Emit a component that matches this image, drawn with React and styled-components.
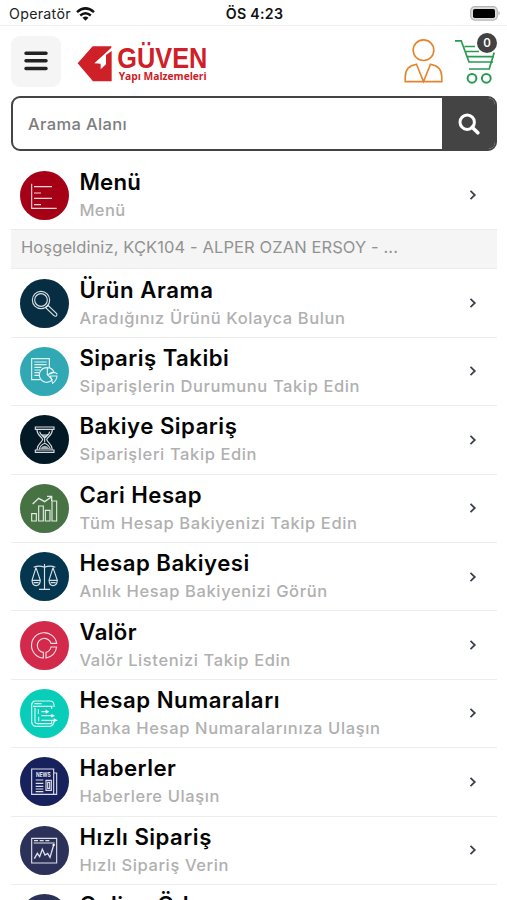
import React from "react";
import styled, { createGlobalStyle } from "styled-components";

const GlobalStyle = createGlobalStyle`
  * { box-sizing: border-box; }
  html, body { margin: 0; padding: 0; background: #fff; }
  body { font-family: Inter, "Liberation Sans", sans-serif; overflow: hidden; }
`;

const Screen = styled.div`
  width: 507px;
  height: 900px;
  overflow: hidden;
  background: #fff;
`;

const StatusBar = styled.div`
  display: grid;
  grid-template-columns: 1fr auto 1fr;
  align-items: center;
  height: 26px;
  padding: 0 6px 0 9px;
  border-bottom: 1px solid #f1f1f1;
  font-size: 14.2px;
  line-height: 24px;
  color: #222;
`;

const Carrier = styled.div`
  display: flex;
  align-items: center;
  gap: 5px;
  padding-top: 2px;
  span { letter-spacing: 0.3px; }
`;

const Clock = styled.div`
  font-weight: 600;
  letter-spacing: 0.3px;
  margin-left: -1px;
  padding-top: 2px;
  color: #111;
`;

const Battery = styled.svg`
  justify-self: end;
  margin-top: 1px;
`;

const Header = styled.header`
  display: flex;
  align-items: flex-start;
  height: 71px;
  padding: 10px 10px 0 11px;
`;

const MenuButton = styled.button`
  display: flex;
  align-items: center;
  justify-content: center;
  width: 50px;
  height: 51px;
  padding: 0 1px 2px 0;
  border: 0;
  border-radius: 9px;
  background: #f5f5f5;
`;

const Logo = styled.svg`
  margin: 4px 0 0 15px;
  overflow: visible;
`;

const Actions = styled.div`
  display: flex;
  margin-left: auto;
  gap: 12px;
  padding-top: 3px;
`;

const CartButton = styled.div`
  position: relative;
  width: 42px;
  height: 45px;
`;

const Badge = styled.span`
  position: absolute;
  top: -6px;
  right: 0;
  width: 20px;
  height: 20px;
  border-radius: 50%;
  background: #424242;
  color: #fff;
  font-size: 11.5px;
  font-weight: 600;
  line-height: 20px;
  text-align: center;
`;

const SearchBox = styled.div`
  display: flex;
  height: 55px;
  margin: -1px 10px 10px 11px;
  border: 2px solid #444;
  border-radius: 9px;
  overflow: hidden;
`;

const SearchLabel = styled.div`
  flex: 1;
  padding-left: 15px;
  line-height: 52px;
  font-size: 16.5px;
  font-weight: 500;
  letter-spacing: 0.36px;
  color: #7d7d7d;
`;

const SearchButton = styled.div`
  display: flex;
  align-items: center;
  justify-content: center;
  width: 53px;
  background: #444;
`;

const List = styled.div`
  margin: 0 10px 0 11px;
`;

const Row = styled.div`
  display: flex;
  align-items: center;
  height: ${(p) => (p.$first ? "68px" : "68.4px")};
  padding: 0 20px 0 9.4px;
  border-top: ${(p) => (p.$first ? "0" : "1px solid #ededed")};
`;

const Labels = styled.div`
  flex: 1;
  padding-left: 10px;
  white-space: nowrap;
`;

const Title = styled.div`
  font-size: 22.2px;
  font-weight: 600;
  line-height: 26px;
  letter-spacing: ${(p) => p.$spacing || 0}px;
  color: #050505;
`;

const Subtitle = styled.div`
  font-size: 16.5px;
  font-weight: 500;
  line-height: 24px;
  padding-top: 3px;
  letter-spacing: ${(p) => p.$spacing || 0}px;
  color: #b0b0b0;
`;

const Welcome = styled.div`
  height: 39.4px;
  padding-left: 10px;
  border-top: 1px solid #ebebeb;
  background: #f5f5f5;
  font-size: 16.5px;
  line-height: 35px;
  letter-spacing: 0.1px;
  color: #929292;
`;

const IconSvg = styled.svg`
  flex: none;
  display: block;
  fill: none;
  stroke: #fff;
  stroke-width: 3.4;
  stroke-opacity: 0.85;
`;

const Disc = ({ color, children }) => (
  <IconSvg width="49" height="49" viewBox="0 0 147 147">
    <circle cx="73.5" cy="73.5" r="73.5" fill={color} stroke="none" />
    {children}
  </IconSvg>
);

const Chevron = () => (
  <svg width="8" height="12" viewBox="0 0 8 12" fill="none" stroke="#3d434b" strokeWidth="1.8">
    <path d="M1.5 1.8 5.8 6 1.5 10.2" />
  </svg>
);

const glyphs = {
  menu: (
    <path d="M35 38V112H110M42 47H96M42 66H63M42 82H96M42 101H63" />
  ),
  search: (
    <>
      <circle cx="63" cy="63" r="26" />
      <circle cx="63" cy="63" r="19" />
      <path d="M79 84 84 79 110 104Q112 108 109 111 105 113 102 110L77 86Z" />
    </>
  ),
  orders: (
    <>
      <path d="M61 98H35V35H88V62M43 45H80M43 53H80M43 61H64M43 69H60M43 77H57M43 85H57" />
      <path d="M82 83V62A22 22 0 1 0 97 98L82 83L102 76A22 22 0 0 0 82 62" />
      <path d="M91 87H111Q110 100 98 109L91 87ZM88 80Q102 72 112 81" />
    </>
  ),
  hourglass: (
    <>
      <path d="M46 36H102V43H46ZM46 105H102V112H46Z" />
      <path d="M51 44C51 62 65 64 68 74 65 84 51 87 51 104M97 44C97 62 83 64 80 74 83 84 97 87 97 104M59 50C60 60 72 64 74 70 77 63 88 61 89 50M74 72V82M58 103C60 91 67 88 74 85 81 88 88 91 91 103" />
      <path d="M64 58H86L74 68ZM60 102Q74 83 89 102Z" fill="#fff" fillOpacity="0.65" stroke="none" />
    </>
  ),
  growth: (
    <>
      <path d="M35 89H49V111H35ZM56 66H70V111H56ZM76 79H90V111H76ZM96 51H110V111H96Z" />
      <path d="M38 60 56 43 74 53 94 39M81 37H95V51" strokeWidth="4" />
    </>
  ),
  scales: (
    <path d="M73.5 36V111M57 112H90M41 46Q57 39 73.5 46 90 39 106 46M48 47 36 85Q37 101 48 101 60 101 61 85L48 47M36 85H61M99 47 87 85Q88 101 99 101 111 101 112 85L99 47M87 85H112M41 92H56M92 92H107" />
  ),
  ring: (
    <>
      <path d="M70 111A38 38 0 1 1 110 67H93A21 21 0 1 0 70 94Z" />
      <path d="M78 94A21 21 0 0 0 93 78H110A38 38 0 0 1 78 111Z" />
    </>
  ),
  bank: (
    <>
      <path d="M102 54V47Q100 36 91 36H44Q35 38 35 48V100Q37 110 47 112H91Q101 109 102 98V94M39 52H98M43 44H65M95 60V54M45 56V100Q47 104 53 104H95V97" />
      <path d="M64 68H80M64 80H98M64 94H104M55 61V75M56 83V97" />
      <path d="M77 62 88 68 77 74ZM94 75 105 80 94 86ZM101 88 113 94 101 100Z" fill="#fff" stroke="none" />
    </>
  ),
  news: (
    <>
      <path d="M35 36H101V112H35ZM102 48H110V112H101M47 69H70M47 79H70M47 88H70M47 96H70M47 104H70M78 70H94V100H78ZM83 76H89V94H83Z" />
      <text x="48" y="61" fontSize="17" fontWeight="600" fontFamily="Inter, sans-serif" fill="#fff" stroke="none" textLength="44" lengthAdjust="spacingAndGlyphs">NEWS</text>
    </>
  ),
  activity: (
    <>
      <path d="M35 37H110V111H35ZM41 51H104" />
      <path d="M42 44H89" strokeDasharray="12 5" strokeWidth="4" />
      <path d="M43 98 52 82 59 92 67 70 75 87 83 82 90 94 101 57" strokeWidth="4" />
      <circle cx="101" cy="57" r="3.5" fill="#fff" stroke="none" />
    </>
  ),
};

const items = [
  { icon: "search", color: "#062d42", title: "Ürün Arama", sub: "Aradığınız Ürünü Kolayca Bulun", titleSpacing: 0.6 },
  { icon: "orders", color: "#30a9b5", title: "Sipariş Takibi", sub: "Siparişlerin Durumunu Takip Edin", titleSpacing: 0.45 },
  { icon: "hourglass", color: "#031a26", title: "Bakiye Sipariş", sub: "Siparişleri Takip Edin" },
  { icon: "growth", color: "#477344", title: "Cari Hesap", sub: "Tüm Hesap Bakiyenizi Takip Edin" },
  { icon: "scales", color: "#05364f", title: "Hesap Bakiyesi", sub: "Anlık Hesap Bakiyenizi Görün" },
  { icon: "ring", color: "#d32a4c", title: "Valör", sub: "Valör Listenizi Takip Edin", titleSpacing: 0.35 },
  { icon: "bank", color: "#08cdb8", title: "Hesap Numaraları", sub: "Banka Hesap Numaralarınıza Ulaşın", titleSpacing: 0.55, subSpacing: 0.64 },
  { icon: "news", color: "#17215c", title: "Haberler", sub: "Haberlere Ulaşın" },
  { icon: "activity", color: "#2b3159", title: "Hızlı Sipariş", sub: "Hızlı Sipariş Verin" },
  { icon: "activity", color: "#2b3159", title: "Online Ödeme", sub: "Online Ödeme Yapın" },
];

const MenuRow = ({ item, first }) => (
  <Row $first={first}>
    <Disc color={item.color}>{glyphs[item.icon]}</Disc>
    <Labels>
      <Title $spacing={item.titleSpacing ?? 0.48}>{item.title}</Title>
      <Subtitle $spacing={item.subSpacing ?? 0.61}>{item.sub}</Subtitle>
    </Labels>
    <Chevron />
  </Row>
);

export default function App() {
  return (
    <>
      <GlobalStyle />
      <Screen>
        <StatusBar>
          <Carrier>
            <span>Operatör</span>
            <svg width="19" height="14" viewBox="0 0 19 14" fill="none" stroke="#111" strokeWidth="2.5">
              <path d="M1 5.1Q9.5-2.4 18 5.1M4.2 8.5Q9.5 4 14.8 8.5" />
              <path d="M6.5 10.7Q9.5 8.5 12.5 10.7L9.5 13.8Z" fill="#111" stroke="none" />
            </svg>
          </Carrier>
          <Clock>ÖS 4:23</Clock>
          <Battery width="31" height="15" viewBox="0 0 31 15">
            <rect x="0.7" y="0.7" width="26.6" height="13.4" rx="4" fill="#ddd" stroke="#b5b5b5" strokeWidth="1.2" />
            <rect x="3" y="3" width="22" height="9" rx="1.8" fill="#000" />
            <path d="M28.5 5Q31 7.2 28.5 9.5Z" fill="#aaa" />
          </Battery>
        </StatusBar>
        <Header>
          <MenuButton aria-label="Menü">
            <svg width="24" height="20" viewBox="0 0 24 20" stroke="#222" strokeWidth="3.5" strokeLinecap="round">
              <path d="M2 2.2H22M2 9.8H22M2 17.6H22" />
            </svg>
          </MenuButton>
          <Logo width="134" height="46" viewBox="228 120 402 138" fill="#cf2027">
            <path d="M233 190 278 139H334V143L283 190 302 191V208L318 193V165L335 153V244H279Z" />
            <text x="352" y="204" fontFamily="Liberation Sans, sans-serif" fontWeight="700" fontSize="86" textLength="270" lengthAdjust="spacingAndGlyphs">GÜVEN</text>
            <text x="356" y="241" fontFamily="Open Sans, sans-serif" fontWeight="700" fontSize="32" textLength="264" lengthAdjust="spacingAndGlyphs">Yapı Malzemeleri</text>
          </Logo>
          <Actions>
            <svg width="39" height="45" viewBox="0 0 39 45" fill="none" stroke="#e4852c" strokeWidth="1.6">
              <circle cx="19.5" cy="11.2" r="10.3" />
              <path d="M12.5 25.2 19.5 42.6 26.5 25.2Q37.8 27 37.8 38V42.6H1.2V38Q1.2 27 12.5 25.2Z" />
            </svg>
            <CartButton>
              <svg width="42" height="45" viewBox="0 0 42 45" fill="none" stroke="#279b50" strokeWidth="1.7">
                <path d="M0 1.8H6.2L14 23H38M9.5 7.5H20M11 12.5H24M12.3 17.7H39M39.2 13.5 34.2 30H14" />
                <circle cx="17" cy="39.3" r="4.4" strokeWidth="2" />
                <circle cx="31.3" cy="39.3" r="4.4" strokeWidth="2" />
              </svg>
              <Badge>0</Badge>
            </CartButton>
          </Actions>
        </Header>
        <SearchBox>
          <SearchLabel>Arama Alanı</SearchLabel>
          <SearchButton>
            <svg width="22" height="22" viewBox="0 0 22 22" fill="none" stroke="#fff" strokeWidth="3">
              <circle cx="9.2" cy="9.2" r="7.2" />
              <path d="M14.2 14.2 19.8 19.8" strokeWidth="3.6" strokeLinecap="round" />
            </svg>
          </SearchButton>
        </SearchBox>
        <List>
          <MenuRow first item={{ icon: "menu", color: "#a60017", title: "Menü", sub: "Menü", titleSpacing: 0.2, subSpacing: 0.4 }} />
          <Welcome>Hoşgeldiniz, KÇK104 - ALPER OZAN ERSOY - ...</Welcome>
          {items.map((item) => (
            <MenuRow key={item.title} item={item} />
          ))}
        </List>
      </Screen>
    </>
  );
}
